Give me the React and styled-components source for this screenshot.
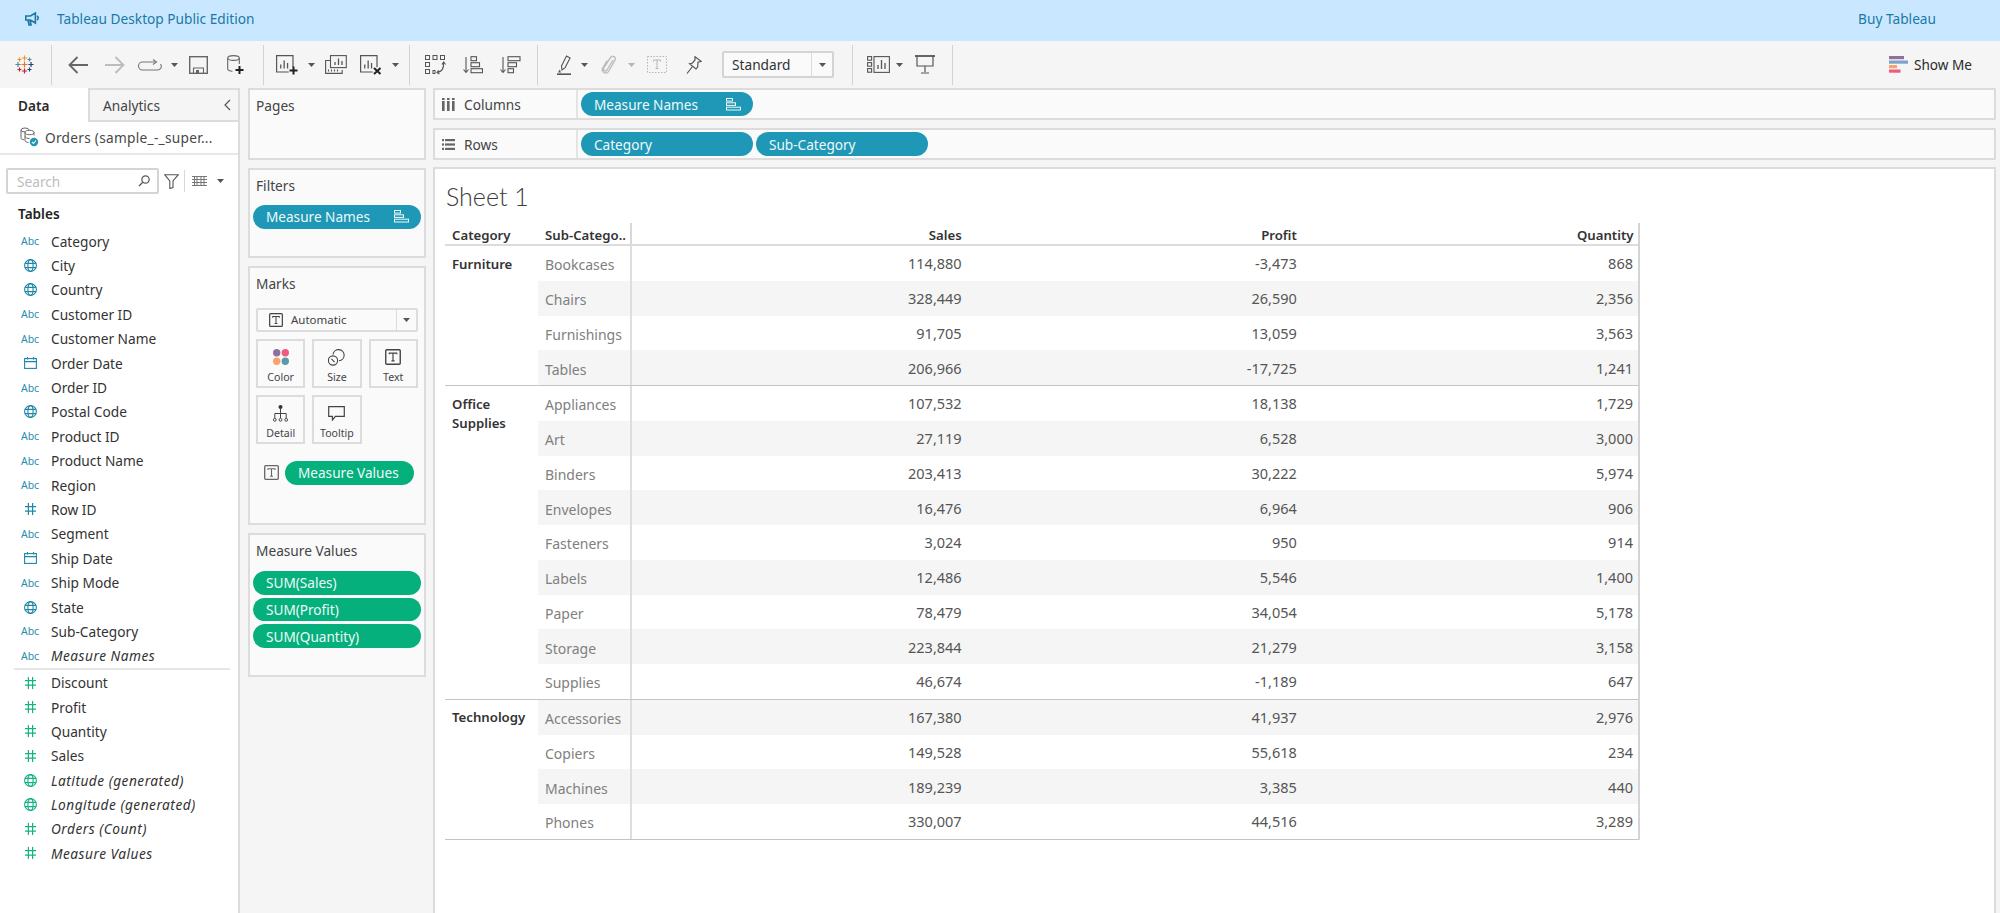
import React from "react";
import styled, { createGlobalStyle } from "styled-components";

const GlobalStyle = createGlobalStyle`
  html, body { margin: 0; padding: 0; background: #f5f5f5; }
  body { font-family: "Noto Sans", "Liberation Sans", sans-serif; color: #333; }
  * { box-sizing: border-box; }
`;

const Page = styled.div`
  width: 2000px;
  height: 913px;
  overflow: hidden;
  display: flex;
  flex-direction: column;
  background: #f5f5f5;
`;

const Banner = styled.div`
  height: 41px;
  flex-shrink: 0;
  background: #c9e8ff;
  color: #1c78a5;
  display: flex;
  align-items: center;
  padding: 0 64px 4px 25px;
  font-size: 13.7px;
`;

const BannerTitle = styled.span`
  margin-left: 17px;
`;

const BuyLink = styled.span`
  margin-left: auto;
`;

const Toolbar = styled.div`
  height: 47px;
  flex-shrink: 0;
  display: flex;
  align-items: center;
  padding-left: 15px;
`;

const Glyph = styled.svg`
  flex-shrink: 0;
  margin-left: ${(p) => p.$gap || 0}px;
  display: block;
`;

const Sep = styled.div`
  width: 1px;
  height: 40px;
  flex-shrink: 0;
  background: #d2d2d2;
  margin-left: ${(p) => p.$gap}px;
`;

const ViewSelect = styled.div`
  width: 112px;
  height: 27px;
  flex-shrink: 0;
  margin-left: 20px;
  border: 2px solid #d4d4d4;
  border-radius: 2px;
  background: #fafafa;
  display: flex;
  align-items: center;
  font-size: 13.7px;
  color: #333;
  padding-left: 8px;
`;

const ViewSelectArrow = styled.div`
  margin-left: auto;
  width: 21px;
  height: 100%;
  border-left: 1px solid #dcdcdc;
  display: flex;
  align-items: center;
  justify-content: center;
`;

const ShowMe = styled.div`
  margin-left: auto;
  margin-right: 28px;
  display: flex;
  align-items: center;
  gap: 6px;
  font-size: 13.6px;
  color: #2b2b2b;
`;

const Workspace = styled.div`
  flex: 1;
  min-height: 0;
  display: flex;
`;

/* data pane */
const DataPane = styled.div`
  width: 240px;
  flex-shrink: 0;
  background: #fff;
  border-right: 2px solid #dcdcdc;
  display: flex;
  flex-direction: column;
`;

const Tabs = styled.div`
  height: 34px;
  display: flex;
`;

const DataTab = styled.div`
  width: 88px;
  padding: 8px 0 0 18px;
  font-size: 13.6px;
  font-weight: 600;
  color: #2b2b2b;
`;

const AnalyticsTab = styled.div`
  flex: 1;
  background: #f5f5f5;
  border: 2px solid #dcdcdc;
  border-right: 0;
  display: flex;
  align-items: center;
  padding: 0 7px 0 13px;
  font-size: 13.7px;
  color: #444;
  justify-content: space-between;
`;

const SourceRow = styled.div`
  height: 33px;
  border-bottom: 2px solid #e8e8e8;
  display: flex;
  align-items: center;
  gap: 6px;
  padding: 0 0 1px 20px;
  font-size: 13.7px;
  letter-spacing: 0.27px;
  color: #484848;
  white-space: nowrap;
`;

const SearchRow = styled.div`
  display: flex;
  align-items: center;
  margin: 13px 0 0 6px;
  height: 26px;
`;

const SearchBox = styled.div`
  width: 153px;
  height: 26px;
  border: 2px solid #d4d4d4;
  border-radius: 2px;
  display: flex;
  align-items: center;
  justify-content: space-between;
  padding: 0 7px 0 9px;
  font-size: 13.7px;
  color: #bdbdbd;
`;

const SearchDivider = styled.div`
  width: 1px;
  height: 22px;
  background: #d8d8d8;
  margin-left: 5px;
`;

const TablesTitle = styled.div`
  margin: 10px 0 5px 18px;
  height: 20px;
  line-height: 20px;
  font-size: 13.6px;
  font-weight: 600;
  color: #222;
`;

const FieldRow = styled.div`
  height: 24.4px;
  display: flex;
  align-items: center;
  padding-left: 21px;
  font-size: 13.7px;
  color: #333;
  font-style: ${(p) => (p.$italic ? "italic" : "normal")};
  letter-spacing: ${(p) => (p.$italic ? "0.5px" : "0")};
`;

const FieldIconSlot = styled.div`
  width: 18px;
  margin-right: 12px;
  display: flex;
  justify-content: center;
  align-items: center;
  flex-shrink: 0;
`;

const AbcMark = styled.span`
  font-size: 10.5px;
  font-style: normal;
  color: #2a8cad;
  letter-spacing: -0.1px;
`;

const FieldDivider = styled.div`
  height: 2.4px;
  margin: 0 8px 0 14px;
  border-top: 2px solid #e6e6e6;
`;

/* shelves column */
const ShelfColumn = styled.div`
  width: 178px;
  flex-shrink: 0;
  margin-left: 8px;
  display: flex;
  flex-direction: column;
  gap: 8px;
`;

const Card = styled.div`
  height: ${(p) => p.$h}px;
  background: #fafafa;
  border: 2px solid #dcdcdc;
  padding: 6px 3px 0;
`;

const CardTitle = styled.div`
  height: 20px;
  line-height: 20px;
  padding-left: 3px;
  font-size: 13.7px;
  color: #444;
`;

const Pill = styled.div`
  height: ${(p) => p.$h || 23.5}px;
  width: ${(p) => (p.$w ? `${p.$w}px` : "100%")};
  flex-shrink: 0;
  border-radius: 12px;
  background: ${(p) => (p.$green ? "#05b07d" : "#1f97b6")};
  color: #eefaf8;
  font-size: 13.6px;
  display: flex;
  align-items: center;
  justify-content: space-between;
  padding: 0 12px 0 13px;
`;

const FilterPills = styled.div`
  margin-top: 9px;
`;

const MarkType = styled.div`
  margin: 13.5px 3px 0;
  height: 24px;
  border: 2px solid #dcdcdc;
  border-radius: 2px;
  background: #fafafa;
  display: flex;
  align-items: center;
  padding-left: 11px;
  gap: 8px;
  font-size: 11.5px;
  color: #444;
`;

const MarkTypeArrow = styled.div`
  margin-left: auto;
  width: 20px;
  height: 100%;
  border-left: 1px solid #dcdcdc;
  display: flex;
  align-items: center;
  justify-content: center;
`;

const MarkGrid = styled.div`
  margin: 7.5px 3px 0;
  display: grid;
  grid-template-columns: repeat(3, 49.3px);
  grid-auto-rows: 49px;
  gap: 7px 7px;
`;

const MarkButton = styled.div`
  border: 2px solid #dcdcdc;
  background: #fafafa;
  display: flex;
  flex-direction: column;
  align-items: center;
  font-size: 10.6px;
  color: #444;
  padding-top: 4px;
`;

const MarkIcon = styled.div`
  height: 24px;
  display: flex;
  align-items: center;
  justify-content: center;
  margin-bottom: 1px;
`;

const EncodingRow = styled.div`
  margin: 17px 0 0 11px;
  display: flex;
  align-items: center;
  gap: 6px;
`;

const PillStack = styled.div`
  margin-top: 10px;
  display: flex;
  flex-direction: column;
  gap: 3.2px;
`;

/* right side */
const MainColumn = styled.div`
  width: 1563px;
  flex-shrink: 0;
  margin-left: 7px;
  display: flex;
  flex-direction: column;
`;

const Shelf = styled.div`
  height: 32px;
  flex-shrink: 0;
  margin-bottom: 8px;
  background: #fafafa;
  border: 2px solid #dcdcdc;
  display: flex;
  align-items: center;
`;

const ShelfLabel = styled.div`
  width: 143px;
  height: 100%;
  border-right: 2px solid #e4e4e4;
  display: flex;
  align-items: center;
  gap: 9px;
  padding-left: 7px;
  font-size: 13.7px;
  color: #444;
`;

const ShelfPills = styled.div`
  display: flex;
  gap: 3px;
  padding-left: 3px;
`;

const Sheet = styled.div`
  flex: 1;
  min-height: 0;
  margin-top: -1px;
  background: #fff;
  border: 2px solid #dcdcdc;
  border-bottom: 0;
  padding: 0 0 0 10px;
`;

const SheetTitle = styled.h1`
  margin: 0;
  height: 54px;
  padding: 12px 0 0 1px;
  font-family: "Lato", "Noto Sans", sans-serif;
  font-size: 25px;
  line-height: 30px;
  font-weight: 300;
  color: #3a3a3a;
`;

const Table = styled.div`
  width: 1194.5px;
  font-size: 14px;
  border-right: 2px solid #d4d4d4;
`;

const HeadRow = styled.div`
  height: 23px;
  display: grid;
  grid-template-columns: 93px 94px repeat(3, 1fr);
  align-items: center;
  border-bottom: 2px solid #dcdcdc;
  font-size: 13.2px;
  font-weight: 600;
  color: #333;
`;

const HeadCell = styled.div`
  height: 100%;
  display: flex;
  align-items: center;
  padding: 3px 5.5px 0 7px;
  justify-content: ${(p) => (p.$right ? "flex-end" : "flex-start")};
  border-right: ${(p) => (p.$rule ? "2px solid #d8d8d8" : "0")};
  white-space: nowrap;
  &:last-child {
    padding-right: 4px;
  }
`;

const Group = styled.div`
  display: grid;
  grid-template-columns: 93px 1fr;
  border-bottom: 1px solid #c4c4c4;
`;

const GroupName = styled.div`
  padding: 8.5px 7px 0;
  font-size: 13.2px;
  font-weight: 600;
  line-height: 19px;
  color: #333;
`;

const DataRow = styled.div`
  height: 34.75px;
  display: grid;
  grid-template-columns: 94px repeat(3, 1fr);
  background: ${(p) => (p.$band ? "#f5f5f5" : "#fff")};
`;

const SubCell = styled.div`
  display: flex;
  align-items: center;
  padding: 3px 7px 0;
  color: #808080;
  border-right: 2px solid #dedede;
`;

const NumCell = styled.div`
  display: flex;
  align-items: center;
  justify-content: flex-end;
  padding: 0 5.5px 0 0;
  font-size: 14.5px;
  color: #555;
  &:last-child {
    padding-right: 4.5px;
  }
`;

/* icons */
const Caret = ({ gap, faint }) => (
  <Glyph $gap={gap} width="7" height="4" viewBox="0 0 7 4">
    <path d="M0 0h7L3.5 4z" fill={faint ? "#b5b5b5" : "#555"} />
  </Glyph>
);

const Plus = ({ x, y, s = 2.6, c }) => (
  <path
    d={`M${x - s} ${y}h${2 * s}M${x} ${y - s}v${2 * s}`}
    stroke={c}
    strokeWidth="1.2"
    fill="none"
  />
);

const TableauLogo = () => (
  <Glyph width="19" height="19" viewBox="0 0 19 19">
    <Plus x={9.5} y={9.5} s={3} c="#e8762d" />
    <Plus x={9.5} y={3} c="#e8962d" />
    <Plus x={9.5} y={16} c="#c72037" />
    <Plus x={3} y={9.5} c="#59879b" />
    <Plus x={16} y={9.5} c="#1f457e" />
    <Plus x={4.5} y={4.5} s={2} c="#eb9129" />
    <Plus x={14.5} y={4.5} s={2} c="#5b879b" />
    <Plus x={4.5} y={14.5} s={2} c="#c72037" />
    <Plus x={14.5} y={14.5} s={2} c="#1f457e" />
  </Glyph>
);

const ChartBox = ({ x = 0, y = 0, w = 17, h = 17, c = "#555" }) => (
  <g transform={`translate(${x} ${y})`} fill="none" stroke={c}>
    <path d={`M${w} ${h * 0.72}V.6H.6V${h}H${w * 0.75}`} strokeWidth="1.2" />
    <path
      d={`M${w * 0.28} ${h - 3.5}v-4M${w * 0.48} ${h - 3.5}v-8M${w * 0.68} ${h - 3.5}v-5.5`}
      strokeWidth="1.3"
    />
  </g>
);

const TBox = ({ size = 15, c = "#444" }) => (
  <svg width={size} height={size} viewBox="0 0 15 15" fill="none" stroke={c}>
    <rect x=".7" y=".7" width="13.6" height="13.6" rx="1" strokeWidth="1.3" />
    <path d="M4 5V3.8h7V5M7.5 3.8v7.4M6 11.2h3" strokeWidth="1.1" />
  </svg>
);

const SortBars = () => (
  <svg width="15" height="13" viewBox="0 0 15 13" fill="none" stroke="#eefaf8" strokeWidth="1">
    <rect x=".5" y=".5" width="6" height="2.6" />
    <rect x=".5" y="4.8" width="9" height="2.6" />
    <rect x=".5" y="9.2" width="14" height="2.8" />
  </svg>
);

const Globe = ({ c }) => (
  <svg width="13" height="13" viewBox="0 0 13 13" fill="none" stroke={c} strokeWidth="1.1">
    <circle cx="6.5" cy="6.5" r="5.9" />
    <ellipse cx="6.5" cy="6.5" rx="2.6" ry="5.9" />
    <path d="M.8 4.4h11.4M.8 8.6h11.4" />
  </svg>
);

const Hash = ({ c }) => (
  <svg width="11" height="12" viewBox="0 0 11 12" fill="none" stroke={c} strokeWidth="1.2">
    <path d="M3.4 0v12M7.6 0v12M0 3.6h11M0 8.2h11" />
  </svg>
);

const Calendar = ({ c }) => (
  <svg width="13" height="12" viewBox="0 0 13 12" fill="none" stroke={c} strokeWidth="1.1">
    <rect x=".6" y="1.6" width="11.8" height="9.8" />
    <path d="M.6 4.6h11.8M3.5 0v2.4M9.5 0v2.4" />
  </svg>
);

const FieldIcon = ({ kind, c }) => {
  if (kind === "abc") return <AbcMark>Abc</AbcMark>;
  if (kind === "geo") return <Globe c={c} />;
  if (kind === "date") return <Calendar c={c} />;
  return <Hash c={c} />;
};

const dims = [
  ["abc", "Category"],
  ["geo", "City"],
  ["geo", "Country"],
  ["abc", "Customer ID"],
  ["abc", "Customer Name"],
  ["date", "Order Date"],
  ["abc", "Order ID"],
  ["geo", "Postal Code"],
  ["abc", "Product ID"],
  ["abc", "Product Name"],
  ["abc", "Region"],
  ["num", "Row ID"],
  ["abc", "Segment"],
  ["date", "Ship Date"],
  ["abc", "Ship Mode"],
  ["geo", "State"],
  ["abc", "Sub-Category"],
  ["abc", "Measure Names", true],
];

const measures = [
  ["num", "Discount"],
  ["num", "Profit"],
  ["num", "Quantity"],
  ["num", "Sales"],
  ["geo", "Latitude (generated)", true],
  ["geo", "Longitude (generated)", true],
  ["num", "Orders (Count)", true],
  ["num", "Measure Values", true],
];

const groups = [
  {
    name: ["Furniture"],
    rows: [
      ["Bookcases", "114,880", "-3,473", "868"],
      ["Chairs", "328,449", "26,590", "2,356"],
      ["Furnishings", "91,705", "13,059", "3,563"],
      ["Tables", "206,966", "-17,725", "1,241"],
    ],
  },
  {
    name: ["Office", "Supplies"],
    rows: [
      ["Appliances", "107,532", "18,138", "1,729"],
      ["Art", "27,119", "6,528", "3,000"],
      ["Binders", "203,413", "30,222", "5,974"],
      ["Envelopes", "16,476", "6,964", "906"],
      ["Fasteners", "3,024", "950", "914"],
      ["Labels", "12,486", "5,546", "1,400"],
      ["Paper", "78,479", "34,054", "5,178"],
      ["Storage", "223,844", "21,279", "3,158"],
      ["Supplies", "46,674", "-1,189", "647"],
    ],
  },
  {
    name: ["Technology"],
    rows: [
      ["Accessories", "167,380", "41,937", "2,976"],
      ["Copiers", "149,528", "55,618", "234"],
      ["Machines", "189,239", "3,385", "440"],
      ["Phones", "330,007", "44,516", "3,289"],
    ],
  },
];

const markButtons = [
  {
    label: "Color",
    icon: (
      <svg width="16" height="16" viewBox="0 0 16 16">
        <circle cx="3.7" cy="3.7" r="3.7" fill="#8e6f9d" />
        <circle cx="12.3" cy="3.7" r="3.7" fill="#f2597f" />
        <circle cx="3.7" cy="12.3" r="3.7" fill="#f8a26d" />
        <circle cx="12.3" cy="12.3" r="3.7" fill="#5a9aa8" />
      </svg>
    ),
  },
  {
    label: "Size",
    icon: (
      <svg width="17" height="17" viewBox="0 0 17 17" fill="none" stroke="#444" strokeWidth="1.1">
        <path d="M5 5.5a5.6 5.6 0 1 1 6 6.3" />
        <circle cx="5" cy="11.5" r="4.6" />
        <path d="M3.4 9.8l3.2 3.4" />
      </svg>
    ),
  },
  { label: "Text", icon: <TBox size={16} /> },
  {
    label: "Detail",
    icon: (
      <svg width="15" height="17" viewBox="0 0 15 17" fill="none" stroke="#444" strokeWidth="1">
        <circle cx="7.5" cy="2" r="2" fill="#333" stroke="none" />
        <path d="M7.5 4v9M1.8 13V8.5h11.4V13" />
        <circle cx="1.8" cy="14.8" r="1.4" />
        <circle cx="7.5" cy="14.8" r="1.4" />
        <circle cx="13.2" cy="14.8" r="1.4" />
      </svg>
    ),
  },
  {
    label: "Tooltip",
    icon: (
      <svg width="17" height="15" viewBox="0 0 17 15" fill="none" stroke="#444" strokeWidth="1.2">
        <path d="M.7.7h15.6v9.6H7.4L4.4 14v-3.7H.7z" />
      </svg>
    ),
  },
];

const App = () => {
  const isBand = (g, r) => {
    const before = groups.slice(0, g).reduce((n, x) => n + x.rows.length, 0);
    return (before + r) % 2 === 1;
  };

  return (
    <Page>
      <GlobalStyle />
      <Banner>
        <svg width="15" height="14" viewBox="0 0 15 14" fill="none" stroke="#1c78a5" strokeWidth="1.6">
          <path d="M.8 4h4.6L10.4 1v10L5.4 8H.8zM3 8l1 5h2l-1-5M12 4c1.6.8 1.6 3.2 0 4" />
        </svg>
        <BannerTitle>Tableau Desktop Public Edition</BannerTitle>
        <BuyLink>Buy Tableau</BuyLink>
      </Banner>

      <Toolbar>
        <TableauLogo />
        <Sep $gap={17} />

        <Glyph $gap={16} width="20" height="18" viewBox="0 0 20 18" fill="none" stroke="#666" strokeWidth="1.8">
          <path d="M20 9H1.5M9.5 1L1.5 9l8 8" />
        </Glyph>
        <Glyph $gap={17} width="20" height="18" viewBox="0 0 20 18" fill="none" stroke="#bcbcbc" strokeWidth="1.8">
          <path d="M0 9h18.5M10.5 1l8 8-8 8" />
        </Glyph>
        <Glyph $gap={13} width="24" height="12" viewBox="0 0 24 12" fill="none" stroke="#777" strokeWidth="1.1">
          <path d="M17 3H4.5a3.7 3.7 0 0 0 0 8h15a3.7 3.7 0 0 0 3-6" />
          <path d="M15 .5L18.5 3 15 5.5" />
        </Glyph>
        <Caret gap={9} />
        <Glyph $gap={11} width="19" height="18" viewBox="0 0 19 18" fill="none" stroke="#666">
          <rect x=".7" y=".7" width="17.6" height="16.6" strokeWidth="1.4" />
          <path d="M4.5 17v-5h10v5" strokeWidth="1.1" />
          <rect x="7" y="14" width="3" height="3" fill="#666" stroke="none" />
        </Glyph>
        <Glyph $gap={19} width="17" height="20" viewBox="0 0 17 20" fill="none" stroke="#666" strokeWidth="1.1">
          <ellipse cx="6.5" cy="3" rx="5.8" ry="2.4" />
          <path d="M.7 3v11c0 1.2 2 2 4.8 2.2M12.3 3v6" />
          <path d="M12.5 11v8M8.5 15h8" stroke="#222" strokeWidth="2" />
        </Glyph>
        <Sep $gap={19} />

        <Glyph $gap={12} width="22" height="20" viewBox="0 0 22 20" fill="none">
          <ChartBox />
          <path d="M17.5 11.5v8M13.5 15.5h8" stroke="#222" strokeWidth="2" />
        </Glyph>
        <Caret gap={10} />
        <Glyph $gap={10} width="22" height="19" viewBox="0 0 22 19" fill="none" stroke="#555" strokeWidth="1.1">
          <rect x="5.5" y=".6" width="15.8" height="12" />
          <path d="M10 10V7M13.5 10V3.5M17 10V6" strokeWidth="1.3" />
          <path d="M5 5.5H.6v12.9h16.6V15M3.5 16.5v-2M6.5 16.5v-2M9.5 16.5v-2M12.5 16.5v-2" />
        </Glyph>
        <Glyph $gap={13} width="22" height="20" viewBox="0 0 22 20" fill="none">
          <ChartBox />
          <path d="M14 13l6.5 6M20.5 13L14 19" stroke="#222" strokeWidth="2" />
        </Glyph>
        <Caret gap={10} />
        <Sep $gap={10} />

        <Glyph $gap={15} width="21" height="20" viewBox="0 0 21 20" fill="none" stroke="#555" strokeWidth="1">
          <rect x=".5" y=".5" width="4" height="4" />
          <rect x="8" y=".5" width="4" height="4" />
          <rect x="15.5" y=".5" width="4" height="4" />
          <rect x=".5" y="7.5" width="4" height="4" />
          <rect x=".5" y="14.5" width="4" height="4" />
          <rect x="8" y="15.5" width="2" height="3" />
          <path d="M18.5 8c.5 5-2 8.5-6 9.5M17 9.5L18.7 7l1.8 2.5M14 15.5l-2 2 2.4 1.5" strokeWidth="1.1" />
        </Glyph>
        <Glyph $gap={17} width="20" height="18" viewBox="0 0 20 18" fill="none" stroke="#555" strokeWidth="1.1">
          <path d="M3 1v15M.5 13.5L3 16.5l2.5-3" />
          <rect x="8" y=".7" width="5.5" height="4" />
          <rect x="8" y="6.7" width="8.5" height="4" />
          <rect x="8" y="12.7" width="11.5" height="4" />
        </Glyph>
        <Glyph $gap={17} width="21" height="18" viewBox="0 0 21 18" fill="none" stroke="#555" strokeWidth="1.1">
          <path d="M3 1v15M.5 13.5L3 16.5l2.5-3" />
          <rect x="8" y=".7" width="12" height="4" />
          <rect x="8" y="6.7" width="8.5" height="4" />
          <rect x="8" y="12.7" width="5.5" height="4" />
        </Glyph>
        <Sep $gap={16} />

        <Glyph $gap={19} width="14" height="20" viewBox="0 0 14 20" fill="none" stroke="#555" strokeWidth="1.1">
          <path d="M4.5 11L9.5 1l3.6 2-5 9.6L5 15z" />
          <path d="M3 15l-1 2h2" />
          <path d="M0 19.2h14" strokeWidth="1.6" />
        </Glyph>
        <Caret gap={10} />
        <Glyph $gap={13} width="16" height="19" viewBox="0 0 16 19" fill="none" stroke="#bdbdbd" strokeWidth="1.4">
          <path d="M12 5L6 15c-1.300 2-4.500.3-3.300-2L9.500 2.500c1.700-2.700 6-.4 4.600 2.400L7.500 16.500c-2 3.200-7.500.8-6-3L6 5.500" />
        </Glyph>
        <Caret gap={11} faint />
        <Glyph $gap={12} width="20" height="17" viewBox="0 0 20 17" fill="none" stroke="#b5b5b5">
          <rect x=".5" y=".5" width="19" height="16" strokeDasharray="1.500 1.500" />
          <path d="M6.500 5.500V4h7v1.500M10 4v8.500M8.500 12.500h3" />
        </Glyph>
        <Glyph $gap={19} width="16" height="18" viewBox="0 0 16 18" fill="none" stroke="#555" strokeWidth="1.2">
          <path d="M9 .8l6.200 4.500-3.200 1-.3 4.500-1.700 2.200L3.500 7.800l3-.8L9 4z" />
          <path d="M6.500 10.500L1 17.500" />
        </Glyph>

        <ViewSelect>
          Standard
          <ViewSelectArrow>
            <Caret />
          </ViewSelectArrow>
        </ViewSelect>
        <Sep $gap={18} />

        <Glyph $gap={14} width="23" height="17" viewBox="0 0 23 17" fill="none" stroke="#555" strokeWidth="1.1">
          <rect x=".6" y=".6" width="4" height="3.600" />
          <rect x=".6" y="6.600" width="4" height="3.600" />
          <rect x=".6" y="12.600" width="4" height="3.600" />
          <rect x="7" y=".6" width="15.400" height="15.800" />
          <path d="M11 13V9M14.500 13V4M18 13V7" strokeWidth="1.300" />
        </Glyph>
        <Caret gap={6} />
        <Glyph $gap={12} width="20" height="19" viewBox="0 0 20 19" fill="none" stroke="#555" strokeWidth="1.200">
          <path d="M0 1h20" strokeWidth="1.800" />
          <path d="M2 1v10h16V1M10 11v6M6 18h8" />
        </Glyph>
        <Sep $gap={17} />

        <ShowMe>
          <svg width="19" height="17" viewBox="0 0 19 17">
            <rect width="15" height="3.200" fill="#8e6f9d" />
            <rect y="4.500" width="19" height="3.200" fill="#7ba3cc" />
            <rect y="9" width="8" height="3.200" fill="#f8a26d" />
            <rect y="13.500" width="11.500" height="3.200" fill="#f2597f" />
          </svg>
          Show Me
        </ShowMe>
      </Toolbar>

      <Workspace>
        <DataPane>
          <Tabs>
            <DataTab>Data</DataTab>
            <AnalyticsTab>
              Analytics
              <svg width="7" height="12" viewBox="0 0 7 12" fill="none" stroke="#555" strokeWidth="1.200">
                <path d="M6 1L1 6l5 5" />
              </svg>
            </AnalyticsTab>
          </Tabs>
          <SourceRow>
            <svg width="19" height="20" viewBox="0 0 19 20" fill="none">
              <g stroke="#666" strokeWidth="1">
                <ellipse cx="5" cy="3" rx="4" ry="2" />
                <path d="M1 3v8c0 1 1.500 1.600 3 1.800M9 3v2" />
                <ellipse cx="9.500" cy="5.500" rx="4.500" ry="2.200" fill="#fff" />
                <path d="M5 5.500v8c0 1 1.500 1.800 3.500 2M14 5.500v3M5 9.500c0 1 2 2 4.500 2" />
              </g>
              <circle cx="14" cy="15" r="4.200" fill="#1f97b6" />
              <path d="M12 15l1.500 1.500 2.500-3" stroke="#fff" strokeWidth="1.100" />
            </svg>
            Orders (sample_-_super...
          </SourceRow>
          <SearchRow>
            <SearchBox>
              Search
              <svg width="12" height="12" viewBox="0 0 12 12" fill="none" stroke="#555" strokeWidth="1.200">
                <circle cx="7.500" cy="4.500" r="3.700" />
                <path d="M4.800 7.300L1 11" />
              </svg>
            </SearchBox>
            <Glyph $gap={5} width="15" height="15" viewBox="0 0 15 15" fill="none" stroke="#555" strokeWidth="1.100">
              <path d="M.7.7h13.600L9 7v6.500l-3.200 1V7z" />
            </Glyph>
            <SearchDivider />
            <Glyph $gap={7} width="15" height="11" viewBox="0 0 15 11" fill="none" stroke="#777" strokeWidth="1">
              <path d="M0 .5h15M0 3.500h15M0 6.500h15M0 9.500h15M2.500 0v10M5 0v10M9 0v10M12 0v10" />
            </Glyph>
            <Caret gap={10} />
          </SearchRow>
          <TablesTitle>Tables</TablesTitle>
          {dims.map(([kind, name, italic]) => (
            <FieldRow key={name} $italic={italic}>
              <FieldIconSlot>
                <FieldIcon kind={kind} c="#1f87a8" />
              </FieldIconSlot>
              {name}
            </FieldRow>
          ))}
          <FieldDivider />
          {measures.map(([kind, name, italic]) => (
            <FieldRow key={name} $italic={italic}>
              <FieldIconSlot>
                <FieldIcon kind={kind} c="#14b184" />
              </FieldIconSlot>
              {name}
            </FieldRow>
          ))}
        </DataPane>

        <ShelfColumn>
          <Card $h={72}>
            <CardTitle>Pages</CardTitle>
          </Card>
          <Card $h={90}>
            <CardTitle>Filters</CardTitle>
            <FilterPills>
              <Pill>
                Measure Names
                <SortBars />
              </Pill>
            </FilterPills>
          </Card>
          <Card $h={259}>
            <CardTitle>Marks</CardTitle>
            <MarkType>
              <TBox size={14} />
              Automatic
              <MarkTypeArrow>
                <Caret />
              </MarkTypeArrow>
            </MarkType>
            <MarkGrid>
              {markButtons.map((b) => (
                <MarkButton key={b.label}>
                  <MarkIcon>{b.icon}</MarkIcon>
                  {b.label}
                </MarkButton>
              ))}
            </MarkGrid>
            <EncodingRow>
              <TBox size={15} c="#666" />
              <Pill $green $w={129}>
                Measure Values
              </Pill>
            </EncodingRow>
          </Card>
          <Card $h={144}>
            <CardTitle>Measure Values</CardTitle>
            <PillStack>
              <Pill $green>SUM(Sales)</Pill>
              <Pill $green>SUM(Profit)</Pill>
              <Pill $green>SUM(Quantity)</Pill>
            </PillStack>
          </Card>
        </ShelfColumn>

        <MainColumn>
          <Shelf>
            <ShelfLabel>
              <svg width="13" height="13" viewBox="0 0 13 13" fill="#666">
                <rect x="0" y="3" width="2.600" height="10" />
                <rect x="5" y="3" width="2.600" height="10" />
                <rect x="10" y="3" width="2.600" height="10" />
                <rect x="0" y="0" width="2.600" height="2" />
                <rect x="5" y="0" width="2.600" height="2" />
                <rect x="10" y="0" width="2.600" height="2" />
              </svg>
              Columns
            </ShelfLabel>
            <ShelfPills>
              <Pill $w={172}>
                Measure Names
                <SortBars />
              </Pill>
            </ShelfPills>
          </Shelf>
          <Shelf>
            <ShelfLabel>
              <svg width="13" height="11" viewBox="0 0 13 11" fill="#666">
                <rect x="0" y="0" width="2" height="2.200" />
                <rect x="0" y="4.400" width="2" height="2.200" />
                <rect x="0" y="8.800" width="2" height="2.200" />
                <rect x="3" y="0" width="10" height="2.200" />
                <rect x="3" y="4.400" width="10" height="2.200" />
                <rect x="3" y="8.800" width="10" height="2.200" />
              </svg>
              Rows
            </ShelfLabel>
            <ShelfPills>
              <Pill $w={172}>Category</Pill>
              <Pill $w={172}>Sub-Category</Pill>
            </ShelfPills>
          </Shelf>
          <Sheet>
            <SheetTitle>Sheet 1</SheetTitle>
            <Table>
              <HeadRow>
                <HeadCell>Category</HeadCell>
                <HeadCell $rule>Sub-Catego..</HeadCell>
                <HeadCell $right>Sales</HeadCell>
                <HeadCell $right>Profit</HeadCell>
                <HeadCell $right>Quantity</HeadCell>
              </HeadRow>
              {groups.map((group, g) => (
                <Group key={group.name[0]}>
                  <GroupName>
                    {group.name.map((line) => (
                      <div key={line}>{line}</div>
                    ))}
                  </GroupName>
                  <div>
                    {group.rows.map((row, r) => (
                      <DataRow key={row[0]} $band={isBand(g, r)}>
                        <SubCell>{row[0]}</SubCell>
                        <NumCell>{row[1]}</NumCell>
                        <NumCell>{row[2]}</NumCell>
                        <NumCell>{row[3]}</NumCell>
                      </DataRow>
                    ))}
                  </div>
                </Group>
              ))}
            </Table>
          </Sheet>
        </MainColumn>
      </Workspace>
    </Page>
  );
};

export default App;
